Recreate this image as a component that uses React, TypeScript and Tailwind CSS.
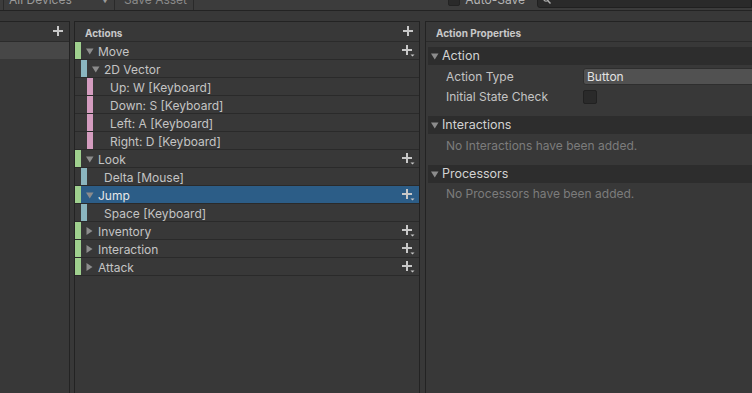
import React from 'react';

type RowKind = 'action' | 'composite' | 'binding' | 'part';

type Row = {
  label: string;
  kind: RowKind;
  open?: boolean;
  selected?: boolean;
};

const rows: Row[] = [
  { label: 'Move', kind: 'action', open: true },
  { label: '2D Vector', kind: 'composite', open: true },
  { label: 'Up: W [Keyboard]', kind: 'part' },
  { label: 'Down: S [Keyboard]', kind: 'part' },
  { label: 'Left: A [Keyboard]', kind: 'part' },
  { label: 'Right: D [Keyboard]', kind: 'part' },
  { label: 'Look', kind: 'action', open: true },
  { label: 'Delta [Mouse]', kind: 'binding' },
  { label: 'Jump', kind: 'action', open: true, selected: true },
  { label: 'Space [Keyboard]', kind: 'binding' },
  { label: 'Inventory', kind: 'action' },
  { label: 'Interaction', kind: 'action' },
  { label: 'Attack', kind: 'action' },
];

const Plus = () => (
  <svg width="10" height="10" viewBox="0 0 10 10" className="block">
    <rect x="4" y="0" width="2" height="10" fill="#c8c8c8" />
    <rect x="0" y="4" width="10" height="2" fill="#c8c8c8" />
  </svg>
);

const PlusMenu = () => (
  <svg width="13" height="12" viewBox="0 0 13 12" className="block">
    <rect x="4" y="0" width="2" height="10" fill="#c8c8c8" />
    <rect x="0" y="4" width="10" height="2" fill="#c8c8c8" />
    <path d="M8.5 9.5h4l-2 2z" fill="#c8c8c8" />
  </svg>
);

const Fold = ({ open }: { open?: boolean }) => (
  <svg width="8" height="8" viewBox="0 0 8 8" className="block shrink-0">
    {open ? <path d="M0 1.5h7.5l-3.75 6z" fill="#8c8c8c" /> : <path d="M0.5 0v8l6-4z" fill="#8c8c8c" />}
  </svg>
);

const ActionRow = ({ row }: { row: Row }) => {
  const indent = row.kind === 'action' ? 'w-0' : row.kind === 'part' ? 'w-[12px]' : 'w-[6px]';
  const bar =
    row.kind === 'action' ? 'bg-[#9fd08e]' : row.kind === 'part' ? 'bg-[#d49cbf]' : 'bg-[#8ab5bf]';
  const hasFold = row.kind === 'action' || row.kind === 'composite';

  return (
    <div className="flex h-[18px] border-b border-[#2a2a2a]">
      <div className={`${indent} shrink-0`} />
      <div className={`w-[6px] shrink-0 ${bar}`} />
      <div
        className={`flex flex-1 items-center ${hasFold ? 'pl-[5px]' : 'pl-[17px]'} pr-[4px] ${
          row.selected ? 'bg-[#2c5d87] text-[#e8e8e8]' : ''
        }`}
      >
        {hasFold && <Fold open={row.open} />}
        <span className={`pt-[2px] ${hasFold ? 'ml-[4px]' : ''}`}>{row.label}</span>
        {row.kind === 'action' && (
          <span className="ml-auto">
            <PlusMenu />
          </span>
        )}
      </div>
    </div>
  );
};

const Foldout = ({ title }: { title: string }) => (
  <div className="mx-[2px] flex h-[18px] items-center bg-[#2d2d2d] pl-[3px] text-[#d2d2d2]">
    <Fold open />
    <span className="ml-[3px] text-[12.5px]">{title}</span>
  </div>
);

const PanelHeader = ({ title, plus }: { title: string; plus?: boolean }) => (
  <div className="flex h-[20px] items-center border-b border-[#2b2b2b] pl-[10px] pr-[6px] text-[10px] font-bold text-[#c8c8c8]">
    <span className="pt-[3px]">{title}</span>
    {plus && (
      <span className="mb-[1px] ml-auto">
        <Plus />
      </span>
    )}
  </div>
);

export default function App() {
  return (
    <div className="h-[393px] w-[752px] overflow-hidden bg-[#383838] font-[Inter,sans-serif] text-[12px] text-[#c4c4c4]">
      {/* toolbar, scrolled partly out of view */}
      <div className="-mt-[11px] flex h-[22px] items-center border-b border-[#232323] bg-[#3c3c3c]">
        <div className="ml-[3px] flex h-full w-[112px] items-center border-x border-[#2a2a2a] pl-[5px] pr-[5px] text-[#9a9a9a]">
          <span>All Devices</span>
          <span className="ml-auto text-[8px]">▼</span>
        </div>
        <div className="flex h-full w-[79px] items-center border-r border-[#2a2a2a] pl-[9px] text-[#8a8a8a]">
          Save Asset
        </div>
        <div className="flex-1" />
        <div className="h-[12px] w-[12px] rounded-[2px] border border-[#232323] bg-[#2a2a2a]" />
        <span className="ml-[5px] text-[#b4b4b4]">Auto-Save</span>
        <div className="ml-[12px] flex h-[17px] w-[215px] items-center rounded-l-[3px] border border-[#202020] bg-[#2a2a2a] pl-[5px]">
          <svg width="8" height="8" viewBox="0 0 8 8">
            <circle cx="3" cy="3" r="2.2" stroke="#b0b0b0" strokeWidth="1.2" fill="none" />
            <path d="M4.6 4.6 7.5 7.5" stroke="#b0b0b0" strokeWidth="1.4" />
          </svg>
        </div>
      </div>

      <div className="mt-[10px] flex h-[400px]">
        {/* action maps */}
        <div className="w-[70px] shrink-0 border-r border-t border-[#232323]">
          <PanelHeader title="" plus />
          <div className="h-[17px] bg-[#474747]" />
        </div>

        {/* actions */}
        <div className="ml-[4px] w-[346px] shrink-0 border-x border-t border-[#232323]">
          <PanelHeader title="Actions" plus />
          {rows.map((r) => (
            <ActionRow key={r.label} row={r} />
          ))}
        </div>

        {/* properties */}
        <div className="ml-[5px] w-[360px] shrink-0 border-l border-t border-[#232323]">
          <PanelHeader title="Action Properties" />
          <div className="mt-[5px]">
            <Foldout title="Action" />
            <div className="mt-[3px] flex h-[17px] items-center pl-[20px]">
              <span className="w-[137px] shrink-0">Action Type</span>
              <div className="flex h-full w-[200px] items-center rounded-l-[3px] border border-[#2e2e2e] bg-[#515151] pl-[3px] text-[#e2e2e2]">
                Button
              </div>
            </div>
            <div className="flex h-[24px] items-center pl-[20px]">
              <span className="w-[137px] shrink-0">Initial State Check</span>
              <div className="h-[14px] w-[14px] rounded-[2px] border border-[#212121] bg-[#2a2a2a]" />
            </div>
            <div className="mt-[7px]">
              <Foldout title="Interactions" />
            </div>
            <div className="flex h-[24px] items-center pl-[20px] text-[#7c7c7c]">No Interactions have been added.</div>
            <div className="mt-[7px]">
              <Foldout title="Processors" />
            </div>
            <div className="flex h-[22px] items-center pl-[20px] text-[#7c7c7c]">No Processors have been added.</div>
          </div>
        </div>
      </div>
    </div>
  );
}
